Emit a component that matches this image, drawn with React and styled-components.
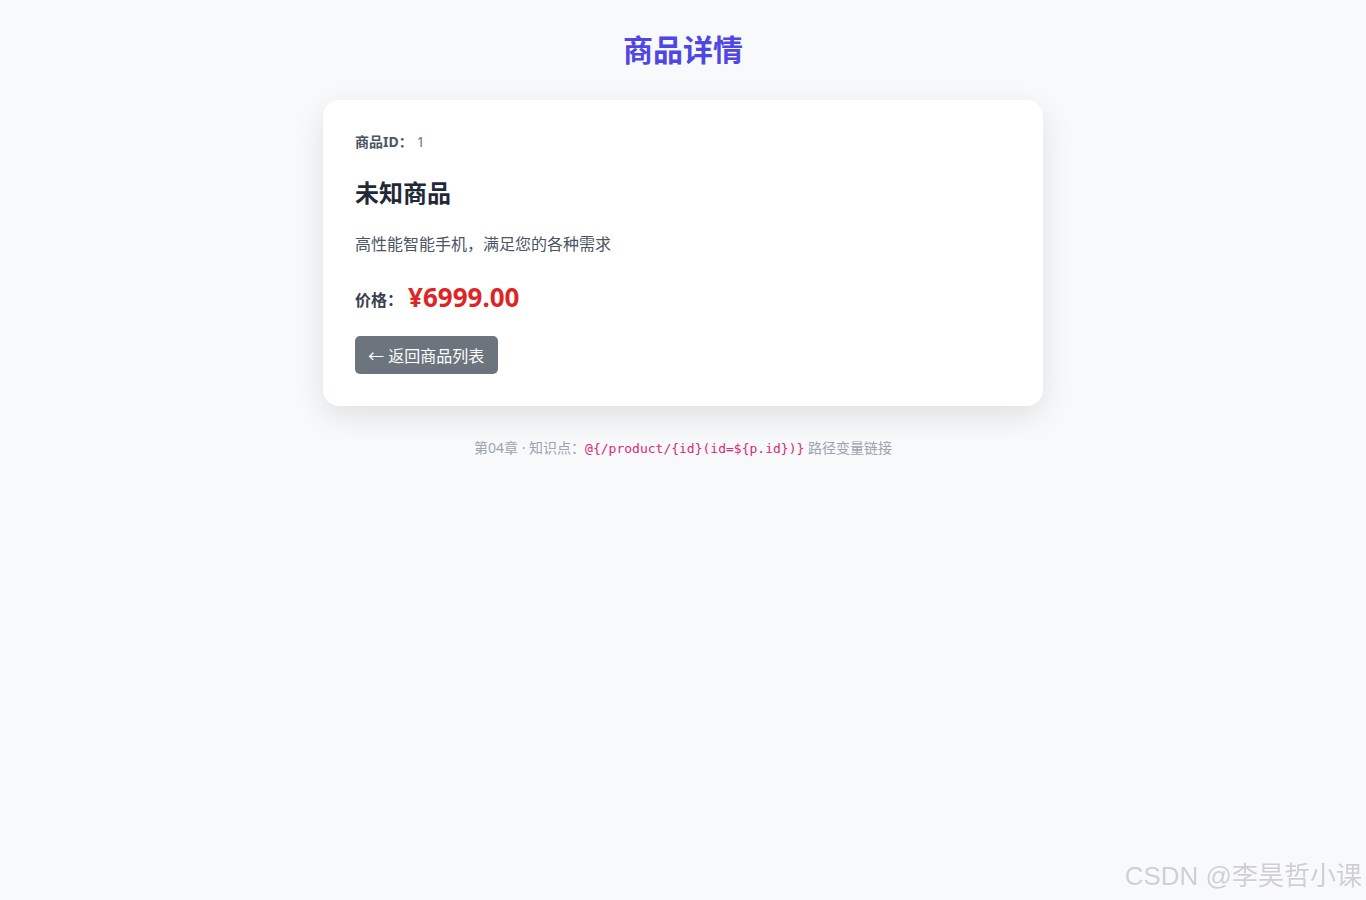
import React from 'react'
import styled, { createGlobalStyle } from 'styled-components'

const GlobalStyle = createGlobalStyle`
  html, body {
    margin: 0;
    padding: 0;
    background: #f8f9fb;
    font-family: "Noto Sans", "Noto Sans CJK SC", sans-serif;
  }
  #root {
    min-height: 900px;
  }
`

const Page = styled.div`
  display: flex;
  flex-direction: column;
  align-items: center;
  padding-top: 32px;
  min-height: 868px;
`

const Title = styled.h1`
  margin: 0 0 32px;
  font-size: 30px;
  line-height: 36px;
  font-weight: 700;
  color: #4f46e5;
`

const Card = styled.div`
  width: 720px;
  box-sizing: border-box;
  padding: 32px;
  background: #fff;
  border-radius: 16px;
  box-shadow: 0 10px 30px rgba(0, 0, 0, 0.1);
`

const IdLine = styled.p`
  margin: 0;
  font-size: 14px;
  line-height: 20px;
  color: #6b7280;
  strong {
    color: #4b5563;
    font-weight: 700;
    margin-right: 4px;
  }
`

const Name = styled.h2`
  margin: 26px 0 0;
  font-size: 24px;
  line-height: 30px;
  font-weight: 700;
  color: #1f2937;
`

const Desc = styled.p`
  margin: 24px 0 0;
  font-size: 16px;
  line-height: 24px;
  color: #4b5563;
`

const PriceLine = styled.div`
  margin-top: 25px;
  display: flex;
  align-items: center;
  gap: 5px;
  height: 32px;
`

const PriceLabel = styled.span`
  font-size: 16px;
  font-weight: 700;
  color: #374151;
  padding-top: 3px;
`

const Price = styled.span`
  font-size: 26px;
  font-weight: 700;
  color: #dc2626;
`

const BackButton = styled.button`
  margin-top: 23px;
  height: 38px;
  padding: 0 14px 0 13px;
  border: none;
  border-radius: 5px;
  background: #6c757d;
  color: #fff;
  font-family: inherit;
  font-size: 16px;
  cursor: pointer;
`

const Footer = styled.p`
  margin: 32px 0 0;
  font-size: 14px;
  line-height: 20px;
  color: #9ca3af;
  code {
    font-family: "DejaVu Sans Mono", "Liberation Mono", monospace;
    font-size: 13px;
    color: #db2777;
  }
`

const Watermark = styled.div`
  position: fixed;
  right: 4px;
  bottom: 8px;
  font-size: 26px;
  color: rgba(170, 170, 170, 0.55);
  font-family: "Liberation Sans", "Noto Sans CJK SC", sans-serif;
  text-shadow: 0 1px 1px rgba(255, 255, 255, 0.8);
`

export default function App() {
  return (
    <Page>
      <GlobalStyle />
      <Title>商品详情</Title>
      <Card>
        <IdLine><strong>商品ID：</strong>1</IdLine>
        <Name>未知商品</Name>
        <Desc>高性能智能手机，满足您的各种需求</Desc>
        <PriceLine>
          <PriceLabel>价格：</PriceLabel>
          <Price>¥6999.00</Price>
        </PriceLine>
        <BackButton>← 返回商品列表</BackButton>
      </Card>
      <Footer>
        第04章 · 知识点：<code>@{'{'}/product/{'{'}id{'}'}(id=${'{'}p.id{'}'}){'}'}</code> 路径变量链接
      </Footer>
      <Watermark>CSDN @李昊哲小课</Watermark>
    </Page>
  )
}
